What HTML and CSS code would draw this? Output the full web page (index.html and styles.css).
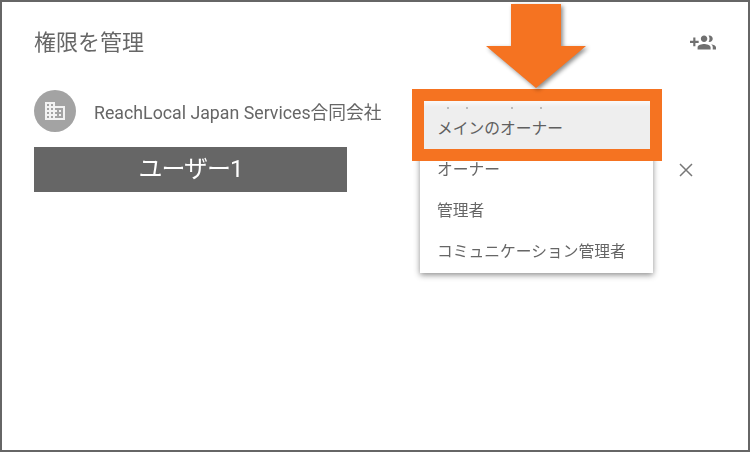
FILE: index.html
```html
<!DOCTYPE html>
<html lang="ja">
<head>
  <meta charset="UTF-8">
  <title>権限を管理</title>
  <meta name="viewport" content="width=device-width, initial-scale=1.0">
  <link rel="stylesheet" href="styles.css">
</head>
<body>
  <div class="panel">
    <div class="header">
      <h2>権限を管理</h2>
      <svg class="add-icon" viewBox="0 0 24 24"><path d="M8 10H5V7H3v3H0v2h3v3h2v-3h3v-2zm10 1c1.66 0 2.99-1.34 2.99-3S19.66 5 18 5c-.32 0-.63.05-.91.14.57.81.9 1.79.9 2.86s-.34 2.04-.9 2.86c.28.09.59.14.91.14zm-5 0c1.66 0 2.99-1.34 2.99-3S14.66 5 13 5s-3 1.34-3 3 1.34 3 3 3zm6.62 2.16c.83.73 1.38 1.66 1.38 2.84v2h3v-2c0-1.54-2.37-2.49-4.38-2.84zM13 13c-2 0-6 1-6 3v2h12v-2c0-2-4-3-6-3z"/></svg>
    </div>

    <div class="company">
      <div class="avatar">
        <svg viewBox="0 0 24 24"><path d="M12 7V3H2v18h20V7H12zM6 19H4v-2h2v2zm0-4H4v-2h2v2zm0-4H4V9h2v2zm0-4H4V5h2v2zm4 12H8v-2h2v2zm0-4H8v-2h2v2zm0-4H8V9h2v2zm0-4H8V5h2v2zm10 12h-8v-2h2v-2h-2v-2h2v-2h-2V9h8v10zm-2-8h-2v2h2v-2zm0 4h-2v2h2v-2z"/></svg>
      </div>
      <span>ReachLocal Japan Services合同会社</span>
    </div>

    <div class="user-row">
      <div class="user-bar">ユーザー1</div>
      <svg class="close-icon" viewBox="0 0 16 16"><path d="M2 2l12 12M14 2L2 14"/></svg>
    </div>

    <div class="menu">
      <div class="menu-item selected">
        <div class="clipped"><i></i><i></i><i></i><i></i></div>
        メインのオーナー
      </div>
      <div class="menu-item">オーナー</div>
      <div class="menu-item">管理者</div>
      <div class="menu-item">コミュニケーション管理者</div>
    </div>

    <div class="highlight"></div>
    <svg class="arrow" viewBox="0 0 100 84"><path d="M25 0h50v42h25L50 84 0 42h25z"/></svg>
  </div>
</body>
</html>
```

FILE: styles.css
```css
* { box-sizing: border-box; margin: 0; padding: 0; }
html, body {
  width: 100%; height: 100%;
  background-color: #ffffff;
  font-family: Roboto, 'Noto Sans CJK JP', sans-serif;
  overflow: hidden;
}
.panel {
  position: relative;
  width: 750px;
  height: 452px;
  border: 2px solid #666;
  padding: 0 32px;
  color: #666;
  filter: blur(0.45px);
}
.header {
  display: flex;
  justify-content: space-between;
  align-items: center;
  height: 44px;
  margin-top: 19px;
}
h2 {
  font-size: 22px;
  font-weight: 400;
  line-height: 44px;
}
.add-icon {
  width: 26px;
  height: 26px;
  fill: #707070;
}
.company {
  display: flex;
  align-items: center;
  gap: 18px;
  margin-top: 25px;
  font-size: 17.75px;
}
.avatar {
  display: flex;
  justify-content: center;
  align-items: center;
  width: 42px;
  height: 42px;
  border-radius: 50%;
  background-color: #a3a3a3;
}
.avatar svg {
  width: 24px;
  height: 24px;
  fill: #f2f2f2;
}
.user-row {
  display: flex;
  justify-content: space-between;
  align-items: center;
  margin-top: 15px;
  padding-right: 22px;
}
.user-bar {
  width: 313px;
  height: 45px;
  background-color: #666;
  color: #fff;
  font-size: 24px;
  letter-spacing: -1px;
  line-height: 45px;
  text-align: center;
}
.close-icon {
  width: 16px;
  height: 16px;
  fill: none;
  stroke: #777;
  stroke-width: 1.5;
}
.menu {
  position: absolute;
  left: 418px;
  top: 99px;
  width: 233px;
  height: 172px;
  background-color: #fff;
  box-shadow: 0 2px 6px rgba(0,0,0,0.45);
  font-size: 15.75px;
}
.menu-item {
  display: flex;
  align-items: center;
  height: 41px;
  padding-left: 17px;
  padding-bottom: 2px;
}
.menu-item.selected {
  position: relative;
  height: 48px;
  padding-top: 6px;
  background: linear-gradient(#fafafa, #eeeeee 6px);
  color: #5f5f5f;
}
.clipped {
  position: absolute;
  left: 27px;
  top: 6px;
  display: flex;
}
.clipped i {
  width: 2px;
  height: 2px;
  background-color: #bbb;
}
.clipped i:nth-child(2) { margin-left: 17px; }
.clipped i:nth-child(3) { margin-left: 43px; }
.clipped i:nth-child(4) { margin-left: 27px; }
.highlight {
  position: absolute;
  left: 410px;
  top: 87px;
  width: 250px;
  height: 72px;
  border: 12px solid #f57321;
}
.arrow {
  position: absolute;
  left: 484px;
  top: 2px;
  width: 100px;
  height: 84px;
  fill: #f57321;
  filter: drop-shadow(2px 2px 2px rgba(0,0,0,0.45));
}
```
